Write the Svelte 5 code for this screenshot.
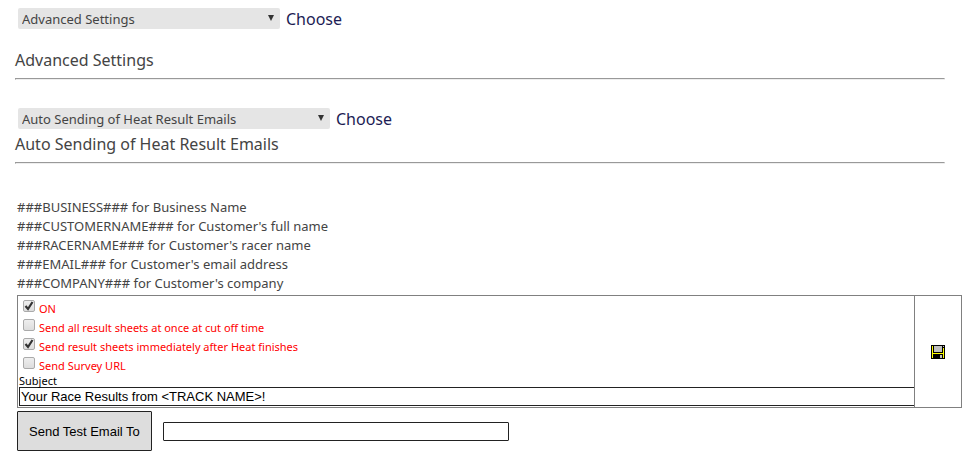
<script lang="ts">
  let section = "Advanced Settings";
  let setting = "Auto Sending of Heat Result Emails";
  let subject = "Your Race Results from <TRACK NAME>!";
  let testEmail = "";

  const tokens = [
    { name: "BUSINESS", text: "Business Name" },
    { name: "CUSTOMERNAME", text: "Customer's full name" },
    { name: "RACERNAME", text: "Customer's racer name" },
    { name: "EMAIL", text: "Customer's email address" },
    { name: "COMPANY", text: "Customer's company" },
  ];

  let options = [
    { id: "on", label: "ON", checked: true },
    { id: "cutoff", label: "Send all result sheets at once at cut off time", checked: false },
    { id: "immediate", label: "Send result sheets immediately after Heat finishes", checked: true },
    { id: "survey", label: "Send Survey URL", checked: false },
  ];
</script>

<main class="page">
  <div class="chooser">
    <span class="select select--section">
      <select bind:value={section} aria-label="Section">
        <option>Advanced Settings</option>
      </select>
    </span>
    <a class="choose" href="#section">Choose</a>
  </div>
  <h1 class="title title--section" id="section">{section}</h1>
  <hr />

  <div class="chooser chooser--setting">
    <span class="select select--setting">
      <select bind:value={setting} aria-label="Setting">
        <option>Auto Sending of Heat Result Emails</option>
      </select>
    </span>
    <a class="choose" href="#setting">Choose</a>
  </div>
  <h2 class="title" id="setting">{setting}</h2>
  <hr />

  <form class="settings" on:submit|preventDefault>
    <div class="tokens">
      {#each tokens as token}
        <div>###{token.name}### for {token.text}</div>
      {/each}
    </div>

    <div class="panel">
      <div class="panel__fields">
        {#each options as option}
          <div class="option">
            <input type="checkbox" id={option.id} bind:checked={option.checked} />
            <label for={option.id}>{option.label}</label>
          </div>
        {/each}
        <label class="subject-label" for="subject">Subject</label>
        <input class="subject" type="text" id="subject" bind:value={subject} />
      </div>
      <div class="panel__save">
        <button class="save" type="submit" aria-label="Save">
          <svg viewBox="0 0 14 14" width="14" height="14" shape-rendering="crispEdges">
            <path fill="#000" d="M0 0h14v14H0z" />
            <path fill="#ff0" d="M1 1h1v12H1zM12 3h1v10h-1zM1 8h12v1H1z" />
            <path fill="#c0c0c0" d="M3 1h8v6H3zM12 1h1v1h-1zM9 10h2v3H9z" />
          </svg>
        </button>
      </div>
    </div>

    <div class="test">
      <button class="test__send" type="button">Send Test Email To</button>
      <input class="test__email" type="text" bind:value={testEmail} aria-label="Test email address" />
    </div>
  </form>
</main>

<style>
  :global(body) {
    background: #fff;
  }

  .page {
    padding: 8px 12px 24px 15px;
    color: #444;
    font-family: "Segoe UI", "Noto Sans", "Open Sans", sans-serif;
    font-size: 13px;
  }

  .chooser {
    display: flex;
    align-items: center;
    gap: 6px;
    height: 21px;
    margin-left: 3px;
  }
  .chooser--setting {
    margin-top: 28px;
  }

  .select {
    position: relative;
    height: 21px;
  }
  .select--section {
    width: 262px;
  }
  .select--setting {
    width: 312px;
  }
  .select::after {
    content: "";
    position: absolute;
    top: 7px;
    right: 6px;
    border: solid transparent;
    border-width: 6px 3px 0;
    border-top-color: #333;
    pointer-events: none;
  }
  select {
    appearance: none;
    width: 100%;
    height: 21px;
    padding: 1px 20px 0 4px;
    border: 0;
    border-radius: 2px;
    background: #e5e5e5;
    color: #444;
    font: inherit;
  }

  .choose {
    color: #1c1c54;
    font-size: 16px;
    line-height: 22px;
    text-decoration: none;
  }

  .title {
    margin: 0;
    font-size: 16px;
    font-weight: 400;
    line-height: 30px;
  }
  .title--section {
    margin-top: 16px;
  }

  hr {
    margin: 3px 17px 0 0;
    border: 1px solid;
    border-color: #999 #eee #eee #999;
  }

  .settings {
    margin: 34px 0 0 2px;
  }
  .tokens {
    line-height: 19px;
  }

  .panel {
    display: flex;
    margin-top: 2px;
    border: 1px solid #808080;
  }
  .panel__fields {
    flex: 1;
    padding: 3px 0 1px 1px;
  }
  .panel__save {
    display: flex;
    align-items: center;
    justify-content: center;
    width: 46px;
    border-left: 1px solid #808080;
  }

  .option {
    display: flex;
    gap: 4px;
    height: 19px;
    padding-left: 4px;
    color: #f00;
    font-size: 11px;
    line-height: 20px;
  }
  .option input {
    appearance: none;
    box-sizing: border-box;
    flex: none;
    width: 12px;
    height: 12px;
    margin: 1px 0 0;
    border: 1px solid #aaa;
    border-radius: 2px;
    background: linear-gradient(#eee, #ddd);
  }
  .option input:checked {
    background:
      url("data:image/svg+xml,%3Csvg xmlns='http://www.w3.org/2000/svg' viewBox='0 0 10 10'%3E%3Cpath d='M1.5 5l2.5 3 4.5-7' fill='none' stroke='%23333' stroke-width='2.2'/%3E%3C/svg%3E"),
      linear-gradient(#eee, #ddd);
  }

  .subject-label {
    display: block;
    color: #000;
    font-size: 11px;
    line-height: 12px;
  }
  .subject {
    display: block;
    box-sizing: border-box;
    width: 100%;
    height: 19px;
    padding: 0 1px;
    border: 1px solid #222;
    border-right: 0;
    background: #fff;
    color: #000;
    font: 13px "Liberation Sans", Arial, sans-serif;
  }

  .save {
    padding: 0;
    border: 0;
    background: none;
    line-height: 0;
  }

  .test {
    display: flex;
    align-items: center;
    gap: 11px;
    margin-top: 3px;
  }
  .test__send {
    height: 40px;
    padding: 0 11px;
    border: 1px solid #222;
    border-radius: 1px;
    background: #ddd;
    color: #000;
    font: 13px "Liberation Sans", Arial, sans-serif;
  }
  .test__email {
    box-sizing: border-box;
    width: 346px;
    height: 19px;
    padding: 0 2px;
    border: 1px solid #222;
    border-radius: 1px;
    background: #fff;
    font: 13px "Liberation Sans", Arial, sans-serif;
  }
</style>
